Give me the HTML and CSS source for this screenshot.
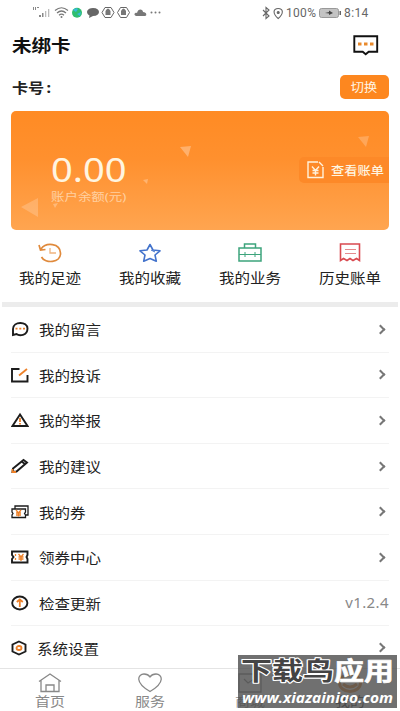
FILE: index.html
```html
<!DOCTYPE html>
<html lang="zh-CN">
<head>
<meta charset="utf-8">
<title>我的</title>
<link rel="stylesheet" href="styles.css">
</head>
<body>
<div class="app">
  <header class="status">
    <svg class="status-icons" width="134" height="16" viewBox="0 0 134 16">
      <g fill="#888"><path d="M1 3h1v3H1zM3 3h1v3H3zM5 3h2v1H5z"/><path d="M7 11h2v2H7zM10 9h1.5v4H10z"/><path d="M13 7h1.300v6H13zM16 5h1.300v8H16z" fill="#bbb"/></g>
      <g fill="none" stroke="#777" stroke-width="1.200"><path d="M23 6.500Q29.500 1 36 6.500M25 9Q29.500 5 34 9M27 11.200Q29.500 9 32 11.200"/></g><circle cx="29.500" cy="13" r="1" fill="#777"/>
      <circle cx="45" cy="8.700" r="5" fill="#2fbe70"/><path d="M41 6q3-3 5-1l-2 3zM45 10l4-2-1 4z" fill="#36b9dc"/>
      <path d="M61 4c8 0 8 8 0 8l-4 2 .5-2.500C53 9 55 4 61 4z" fill="#666"/>
      <g fill="none" stroke="#666" stroke-width="1"><path d="M73 3.500h6l3 5-3 5h-6l-3-5zM88.500 3.500h6l3 5-3 5h-6l-3-5z"/></g>
      <path d="M73.500 7q2.500-5 5 0v4h-5zM89 7q2.500-5 5 0v4h-5z" fill="#777"/>
      <path d="M104 12c-3-1-1-4 1-3 1-5 6-4 6-1 4 0 4 4 2 4z" fill="#777"/>
      <g fill="#777"><circle cx="119.500" cy="8.500" r="1"/><circle cx="123.500" cy="8.500" r="1"/><circle cx="127.500" cy="8.500" r="1"/></g>
    </svg>
    <div class="status-right">
      <svg width="22" height="14" viewBox="0 0 22 14" fill="none" stroke="#666" stroke-width="1.100"><path d="M1 4l6 6-3 2.500v-11L7 4l-6 6"/><path d="M16.200 12.500c-6-5-5-10 0-10s6 5 0 10z"/><circle cx="16.200" cy="6.500" r="1" fill="#666"/></svg>
      <span class="pct">100%</span>
      <svg width="22" height="10" viewBox="0 0 22 10"><rect x=".5" y=".5" width="19" height="9" rx="2" fill="#c3c3c3" stroke="#999"/><path d="M20.500 3h1.500v4h-1.500z" fill="#666"/><path d="M6 5l4-1V2.500L14 5l-4 2V5.500z" fill="#444"/></svg>
      <span class="time">8:14</span>
    </div>
  </header>
  <section class="title">
    <h1 class="wide">未绑卡</h1>
    <svg width="26" height="21" viewBox="0 0 26 21"><path d="M1.300 1.300h22.900v15.500h-8.500l-3 2.500-3-2.500H1.300z" fill="none" stroke="#111" stroke-width="1.900"/><path d="M5 7.500h3.500v3H5zM11 7.500h3.500v3H11zM17 7.500h3.500v3H17z" fill="#e98a2c"/></svg>
  </section>
  <section class="cardno">
    <span class="wide">卡号<span class="colon">:</span></span>
    <button class="switch"><span>切换</span></button>
  </section>
  <section class="card">
    <svg class="shapes" width="378" height="119" viewBox="0 0 378 119" fill="#fff"><path d="M10 96l17-9v19z" opacity=".2"/><path d="M169 36l11-1-3 11z" opacity=".3"/><path d="M132 69l5-1-1 5zM42 93l5-1-3 5z" opacity=".28"/><path d="M347 26l11-1-3 11z" opacity=".22"/></svg>
    <div class="balance"><div class="amount">0.00</div><div class="label">账户余额(元)</div></div>
    <div class="bill"><svg width="17" height="18" viewBox="0 0 17 18" fill="none" stroke="#fff2dc" stroke-width="1.400"><path d="M11 1H1v15.500h15V6M12 1l4 4M5 5.500l3.500 4 3.500-4M8.500 9.500v5M5.500 9.500h6M5.500 12h6"/></svg><span class="wide">查看账单</span></div>
  </section>
  <nav class="quick">
    <a><svg width="24" height="20" viewBox="0 0 24 20" fill="none" stroke="#e08a3c" stroke-width="1.700"><path d="M3 6C8-1 22 0 22.500 10S7 21 3.500 14M1 2l1.500 5 5-.5"/><path d="M12 5v5h6" stroke="#efb47f" stroke-width="1.300"/></svg><span class="wide">我的足迹</span></a>
    <a><svg width="24" height="20" viewBox="0 0 24 20" fill="none" stroke="#4373cc" stroke-width="1.600" stroke-linejoin="round"><path d="M12 1.500l3 5.500 7 .8-5 4.200 1.300 6.200L12 15.500l-6.300 2.700L7 12 2 7.800 9 7z"/><path d="M13 7l4 2" stroke-width="1"/></svg><span class="wide">我的收藏</span></a>
    <a><svg width="24" height="20" viewBox="0 0 24 20" fill="none" stroke="#3da47c" stroke-width="1.500"><path d="M1 5h22v13H1zM6.500 5V1h11v4"/><path d="M1 11.500h22M7 9v5M17 9v5" stroke-width="1"/></svg><span class="wide">我的业务</span></a>
    <a><svg width="24" height="20" viewBox="0 0 24 20" fill="none" stroke="#d94a50" stroke-width="1.600"><path d="M2.500 17.500V1h19v16.500l-3-2-3.500 2-3-2-3 2-3.500-2z"/><path d="M7 6.500h11M7 10.500h11" stroke-width="1" stroke="#e58a8d"/></svg><span class="wide">历史账单</span></a>
  </nav>
  <main class="list">
    <div class="row"><svg class="ic" viewBox="0 0 18 16"><path d="M2 14V8C2 0 16.500 0 16.500 7.500S8 15 5.500 13z"/><path class="o" d="M4.500 7.700h2M8.300 7.700h2M12 7.700h2"/></svg><span class="wide">我的留言</span><i class="arrow"></i></div>
    <div class="row"><svg class="ic" viewBox="0 0 18 16"><path d="M8.500 2H1v12.500h15.500V8"/><path class="o" d="M8 8.500L16 2"/></svg><span class="wide">我的投诉</span><i class="arrow"></i></div>
    <div class="row"><svg class="ic" viewBox="0 0 18 16"><path d="M9 2.500L1.500 14h15z"/><path class="o" d="M9 6v4M9 11v1.500"/></svg><span class="wide">我的举报</span><i class="arrow"></i></div>
    <div class="row"><svg class="ic" viewBox="0 0 18 16"><path d="M2 10.500L12.500 2l3.500 2.500L5.500 13.500 1.500 14zM10.500 3.500L14 6"/><path class="o" d="M1.500 11v3H5"/></svg><span class="wide">我的建议</span><i class="arrow"></i></div>
    <div class="row"><svg class="ic t" viewBox="0 0 18 16"><path d="M4 4.500V2h13v9h-2M1 5h13.500v3l-1 1.500 1 1.500v2.500H1V11l1-1.500L1 8z"/><path class="o" d="M5 6l2.500 3L10 6M7.500 9v3.500M5 9h5M5 11h5"/></svg><span class="wide">我的券</span><i class="arrow"></i></div>
    <div class="row"><svg class="ic" viewBox="0 0 18 16"><path d="M1 2.500h15.500v3.500l-1 2 1 2v3.500H1V10l1.500-2L1 6z"/><path class="o t" d="M7.500 5l2.500 3 2.500-3M10 8v4M7.500 8h5M7.500 10h5M4.500 5v2M4.500 9v2"/></svg><span class="wide">领券中心</span><i class="arrow"></i></div>
    <div class="row"><svg class="ic" viewBox="0 0 18 16"><ellipse cx="8.800" cy="8" rx="7.600" ry="6.500"/><path class="o" d="M8.800 12V4.500M5.800 7l3-2.500 3 2.500"/></svg><span class="wide">检查更新</span><span class="version">v1.2.4</span></div>
    <div class="row last"><svg class="ic" viewBox="0 0 18 16"><path d="M8 1.500l6.500 3v7L8 14.500l-6.500-3v-7z"/><ellipse class="o" cx="8" cy="8" rx="2.500" ry="2"/></svg><span class="wide">系统设置</span><i class="arrow"></i></div>
  </main>
  <footer class="tabs">
    <a><svg width="24" height="20" viewBox="0 0 24 20"><path d="M1 8.500L12 1l11 7.500M3 7.500V18.500h18V7.500M8 18v-6h8v6"/></svg><span>首页</span></a>
    <a><svg width="26" height="20" viewBox="0 0 26 20"><path d="M13 18.500C-3 9 1 1 7 1q4 0 6 3 2-3 6-3c6 0 10 8-6 17.500z"/></svg><span>服务</span></a>
    <a><svg width="24" height="20" viewBox="0 0 24 20"><path d="M1 1h22v18H1zM6 6l4 4 6-4"/></svg><span>商城</span></a>
    <a class="active"><svg width="24" height="20" viewBox="0 0 24 20"><ellipse cx="12" cy="10" rx="10.500" ry="8.500"/><path d="M5 11q7 6 14 0"/></svg><span>我的</span></a>
  </footer>
</div>
<div class="mark">
  <svg width="159" height="53" viewBox="0 0 159 53">
    <g class="name"><text class="dark" x="3" y="25" textLength="93" lengthAdjust="spacingAndGlyphs">下载鸟</text><text class="light" x="96" y="25" textLength="60" lengthAdjust="spacingAndGlyphs">应用</text></g>
    <text class="url" x="4" y="47.500" textLength="151" lengthAdjust="spacingAndGlyphs">www.xiazainiao.com</text>
  </svg>
</div>
</body>
</html>
```
FILE: styles.css
```css
* { box-sizing: border-box; }
body { margin: 0; background: #fff; color: #222; font-family: "Noto Sans", "Noto Sans CJK SC", sans-serif; }
svg { display: block; flex: none; }
.app { width: 400px; height: 711px; overflow: hidden; display: flex; flex-direction: column; }
.wide { display: inline-block; transform: scaleX(1.15); transform-origin: left center; white-space: nowrap; }
.status { height: 26px; padding: 0 31px 0 32px; display: flex; justify-content: space-between; align-items: center; }
.status-icons { margin-top: -2px; }
.status-right { display: flex; align-items: center; font: 12px/16px Roboto, sans-serif; color: #666; }
.pct { width: 32px; margin: 0 1px 0 2px; letter-spacing: .3px; }
.time { width: 25px; margin-left: 3px; letter-spacing: .4px; }
.title { height: 42px; padding: 9px 21px 0 12px; display: flex; justify-content: space-between; }
.title h1 { margin: 0; font-size: 17px; line-height: 22px; font-weight: 700; color: #111; }
.cardno { height: 43px; padding: 7px 11px 0 12px; display: flex; justify-content: space-between; font-size: 14px; line-height: 25px; font-weight: 700; }
.colon { margin-left: 2px; }
.switch { width: 49px; height: 24px; border: 0; border-radius: 5px; background: #fd871f; color: #fff5e5; font: 12px/24px "Noto Sans CJK SC", sans-serif; padding: 0; }
.switch span { display: inline-block; transform: scaleX(1.1); }
.card { position: relative; flex: none; width: 378px; height: 119px; margin-left: 11px; border-radius: 5px; background: linear-gradient(#ff8b24, #ff902e 40%, #ffa550); overflow: hidden; display: flex; justify-content: space-between; color: #fff5e0; }
.shapes { position: absolute; left: 0; top: 0; }
.balance { padding: 39px 0 0 40px; }
.amount { width: 64px; font: 32px/39px "Noto Sans", sans-serif; transform: scaleX(1.19); transform-origin: left; }
.label { font-size: 11.500px; line-height: 16px; color: #ffd0a0; transform: scaleX(1.17); transform-origin: left; }
.bill { width: 90px; height: 26px; margin-top: 46px; padding-left: 8px; display: flex; align-items: center; gap: 7px; background: #fd8928; border-radius: 5px 0 0 5px; font-size: 11.500px; font-weight: 500; }
.quick { height: 72px; flex: none; display: flex; padding-top: 13px; }
.quick a { width: 100px; display: flex; flex-direction: column; align-items: center; }
.quick .wide { font-size: 13.500px; line-height: 20px; margin-top: 5px; transform-origin: center; }
.list { flex: none; height: 366px; border-top: 5px solid #ececec; margin: 0 2px; padding: 0 9px; }
.row { height: 45.600px; display: flex; align-items: center; border-bottom: 1px solid #f3f3f3; font-size: 13.500px; }
.row .wide { margin-left: 10px; }
.row.last { border: 0; padding-bottom: 2px; }
.row.last .wide { margin-left: 8px; }
.ic { width: 18px; height: 16px; fill: none; stroke: #1c1c1c; stroke-width: 1.900; }
.ic .o { stroke: #ed8028; stroke-width: 1.800; }
.ic.t, .ic .o.t, .ic.t .o { stroke-width: 1.300; }
.arrow { width: 7px; height: 7px; margin: 0 5px 0 auto; border: solid #777; border-width: 2px 2px 0 0; transform: rotate(45deg); }
.version { margin-left: auto; color: #888; font-size: 14px; letter-spacing: .4px; transform: scaleX(1.07); transform-origin: right; }
.tabs { height: 43px; flex: none; border-top: 1px solid #e4e4e4; display: flex; }
.tabs a { width: 100px; padding-top: 4px; display: flex; flex-direction: column; align-items: center; font-size: 13px; line-height: 17px; color: #888; }
.tabs svg { fill: none; stroke: #888; stroke-width: 1.300; }
.tabs span { transform: scaleX(1.15); }
.tabs .active { color: #333; }
.tabs .active svg { stroke: #e9862d; stroke-width: 3; }
.mark { position: absolute; left: 238px; top: 655px; width: 159px; height: 53px; background: rgba(80, 80, 80, .82); }
.mark text { font-family: "Noto Sans CJK SC", sans-serif; font-weight: 700; paint-order: stroke; stroke-linejoin: round; }
.name text { font-size: 25px; }
.mark .dark { fill: #444; stroke: #fff; stroke-width: 2.200px; }
.mark .light { fill: #fff; stroke: #fff; stroke-width: .6px; }
.mark .url { font: italic 700 14px "Open Sans", sans-serif; fill: #fff; }
```
